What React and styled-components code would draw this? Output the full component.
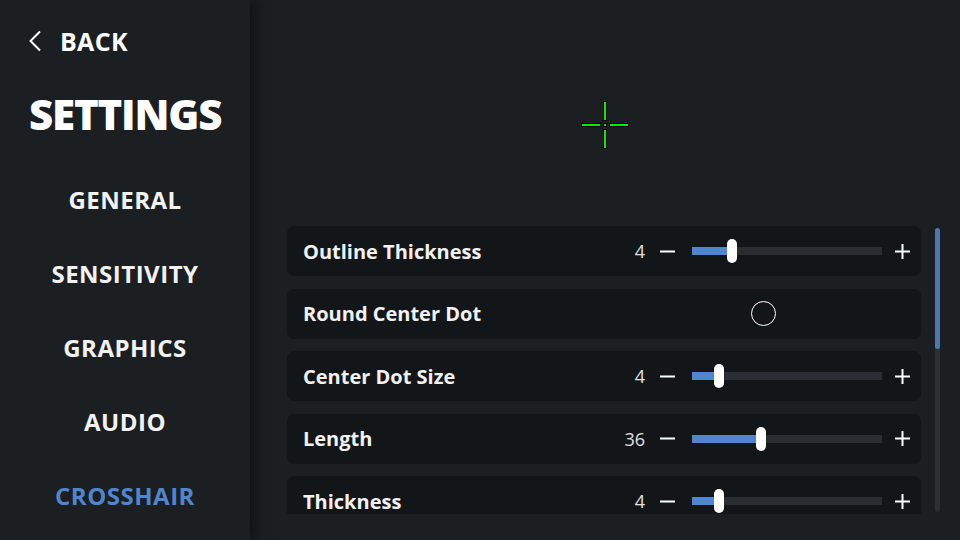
import React, { useState } from "react";
import styled, { createGlobalStyle } from "styled-components";

const GlobalStyle = createGlobalStyle`
  html, body {
    margin: 0;
    padding: 0;
    background: #1b1f22;
    font-family: "Open Sans", "Noto Sans", sans-serif;
    color: #f2f2f2;
    overflow: hidden;
  }
  * { box-sizing: border-box; }
`;

const menu = ["GENERAL", "SENSITIVITY", "GRAPHICS", "AUDIO", "CROSSHAIR"];

const settings = [
  { label: "Outline Thickness", type: "slider", value: 4, pos: 0.194 },
  { label: "Round Center Dot", type: "toggle" },
  { label: "Center Dot Size", type: "slider", value: 4, pos: 0.122 },
  { label: "Length", type: "slider", value: 36, pos: 0.356 },
  { label: "Thickness", type: "slider", value: 4, pos: 0.122 },
];

const Crosshair = () => (
  <svg width="50" height="50" viewBox="0 0 50 50">
    {/* outline first, green on top */}
    <g fill="#000">
      <rect x="23" y="1" width="4" height="20" />
      <rect x="23" y="29" width="4" height="20" />
      <rect x="1" y="23" width="20" height="4" />
      <rect x="29" y="23" width="20" height="4" />
      <rect x="23" y="23" width="4" height="4" />
    </g>
    <g fill="#00ee00">
      <rect x="24" y="2" width="2" height="18" />
      <rect x="24" y="30" width="2" height="18" />
      <rect x="2" y="24" width="18" height="2" />
      <rect x="30" y="24" width="18" height="2" />
      <rect x="24" y="24" width="2" height="2" />
    </g>
  </svg>
);

const App = () => {
  const [active] = useState("CROSSHAIR");

  return (
    <>
      <GlobalStyle />
      <Page>
        <Sidebar>
          <BackRow>
            <svg width="14" height="22" viewBox="0 0 14 22">
              <polyline
                points="12,1.5 2.5,11 12,20.5"
                fill="none"
                stroke="#fff"
                strokeWidth="2"
              />
            </svg>
            <BackText>BACK</BackText>
          </BackRow>
          <Title>SETTINGS</Title>
          <Menu>
            {menu.map((m) => (
              <MenuItem key={m} $active={m === active}>
                {m}
              </MenuItem>
            ))}
          </Menu>
        </Sidebar>
        <Main>
          <Preview>
            <Crosshair />
          </Preview>
          <ListArea>
            <Rows>
              {settings.map((s) => (
                <Row key={s.label}>
                  <Label>{s.label}</Label>
                  <Controls>
                    {s.type === "slider" ? (
                      <>
                        <Value>{s.value}</Value>
                        <StepButton>
                          <svg width="15" height="15" viewBox="0 0 15 15">
                            <line x1="0" y1="7.5" x2="15" y2="7.5" stroke="#fff" strokeWidth="2" />
                          </svg>
                        </StepButton>
                        <Track>
                          <Fill style={{ width: `${5 + s.pos * 180}px` }} />
                          <Thumb style={{ left: `${s.pos * 180}px` }} />
                        </Track>
                        <StepButton>
                          <svg width="15" height="15" viewBox="0 0 15 15">
                            <line x1="0" y1="7.5" x2="15" y2="7.5" stroke="#fff" strokeWidth="2" />
                            <line x1="7.5" y1="0" x2="7.5" y2="15" stroke="#fff" strokeWidth="2" />
                          </svg>
                        </StepButton>
                      </>
                    ) : (
                      <Toggle />
                    )}
                  </Controls>
                </Row>
              ))}
            </Rows>
            <ScrollTrack>
              <ScrollThumb />
            </ScrollTrack>
          </ListArea>
        </Main>
      </Page>
    </>
  );
};

const Page = styled.div`
  display: flex;
  width: 960px;
  height: 540px;
  background: #1b1f22;
`;

const Sidebar = styled.div`
  position: relative;
  z-index: 1;
  width: 250px;
  flex-shrink: 0;
  background: #1b1f22;
  box-shadow: 4px 0 14px rgba(0, 0, 0, 0.55);
  padding: 22px 0 0 0;
  display: flex;
  flex-direction: column;
`;

const BackRow = styled.div`
  display: flex;
  align-items: center;
  height: 38px;
  padding-left: 28px;
  gap: 18px;
`;

const BackText = styled.span`
  font-size: 25px;
  font-weight: 700;
  color: #fff;
  line-height: 38px;
  letter-spacing: 0.3px;
`;

const Title = styled.h1`
  margin: 24px 0 0 0;
  padding-left: 29px;
  font-size: 42px;
  font-weight: 800;
  letter-spacing: -1.2px;
  line-height: 60px;
  color: #fff;
`;

const Menu = styled.div`
  margin-top: 19px;
  display: flex;
  flex-direction: column;
`;

const MenuItem = styled.div`
  height: 74px;
  line-height: 74px;
  text-align: center;
  font-size: 24px;
  font-weight: 700;
  letter-spacing: 0.5px;
  color: ${(p) => (p.$active ? "#4f86cf" : "#f2f2f2")};
`;

const Main = styled.div`
  flex: 1;
  display: flex;
  flex-direction: column;
  padding: 24px 20px 26px 37px;
`;

const Preview = styled.div`
  height: 202px;
  display: flex;
  align-items: center;
  justify-content: center;
  margin-left: -37px;
  margin-right: -20px;
`;

const ListArea = styled.div`
  flex: 1;
  display: flex;
  gap: 14px;
  min-height: 0;
`;

const Rows = styled.div`
  flex: 1;
  display: flex;
  flex-direction: column;
  gap: 12.5px;
  overflow: hidden;
`;

const Row = styled.div`
  flex-shrink: 0;
  height: 50px;
  background: #131619;
  border-radius: 7px;
  display: flex;
  align-items: center;
  justify-content: space-between;
  padding: 0 11px 0 16px;
`;

const Label = styled.span`
  font-size: 20px;
  font-weight: 700;
  color: #f2f2f2;
`;

const Controls = styled.div`
  width: 293px;
  display: flex;
  align-items: center;
  justify-content: center;
`;

const Value = styled.span`
  width: 28px;
  text-align: right;
  font-size: 18px;
  font-weight: 400;
  color: #e0e0e0;
  margin-right: 15px;
`;

const StepButton = styled.div`
  width: 15px;
  height: 15px;
  display: flex;
  svg { display: block; }
`;

const Track = styled.div`
  position: relative;
  width: 190px;
  height: 8px;
  background: #2a2d32;
  margin: 0 13px 0 17px;
`;

const Fill = styled.div`
  position: absolute;
  left: 0;
  top: 0;
  bottom: 0;
  background: #4f86cf;
`;

const Thumb = styled.div`
  position: absolute;
  top: -8px;
  width: 10px;
  height: 24px;
  border-radius: 5px;
  background: #fff;
`;

const Toggle = styled.div`
  width: 25px;
  height: 25px;
  border-radius: 50%;
  border: 1.5px solid #fff;
`;

const ScrollTrack = styled.div`
  width: 5px;
  margin: 2px 0;
  border-radius: 3px;
  background: #2b2e33;
  position: relative;
`;

const ScrollThumb = styled.div`
  height: 121px;
  border-radius: 3px;
  background: #4a78b5;
`;

export default App;
